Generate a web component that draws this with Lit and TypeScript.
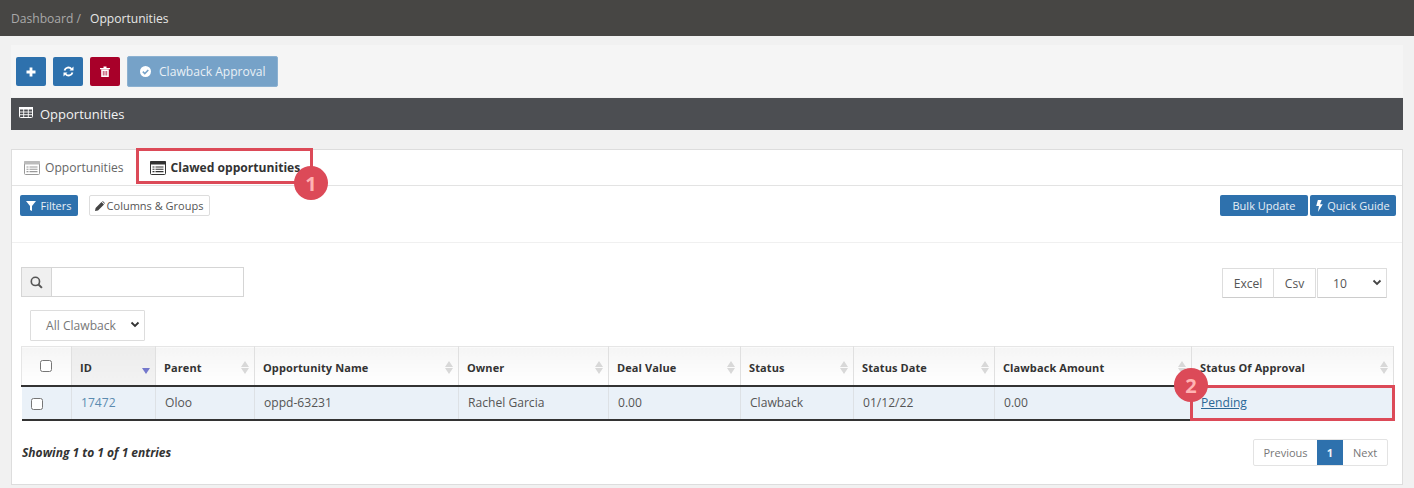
import { LitElement, html, css, svg } from "lit";
import { customElement } from "lit/decorators.js";

const cols: [string, number][] = [
  ["ID", 84], ["Parent", 99], ["Opportunity Name", 204], ["Owner", 150], ["Deal Value", 132],
  ["Status", 113], ["Status Date", 141], ["Clawback Amount", 197], ["Status Of Approval", 202],
];
const listIcon = (c: string, bar: string) => svg`<svg width="16" height="14" viewBox="0 0 16 14"><rect x=".5" y=".5" width="15" height="13" rx="1" fill="#fff" stroke="${c}"/><rect x="0" y="0" width="16" height="3.500" rx="1" fill="${bar}"/><path d="M2.500 6h2M5.500 6h8M2.500 8.300h2M5.500 8.300h8M2.500 10.600h2M5.500 10.600h8" stroke="${c}" stroke-width="1.100"/></svg>`;
const sort = (active = false) => html`<span class="sort ${active ? "on" : ""}"><i class="up"></i><i class="down"></i></span>`;

@customElement("app-root")
export class AppRoot extends LitElement {
  static styles = css`
    :host { display: block; width: 1414px; height: 488px; overflow: hidden; background: #f1f1f1; font: 12.100px "Open Sans", sans-serif; color: #555; position: relative; }
    * { box-sizing: border-box; }
    .crumb { height: 36px; background: #474644; display: flex; align-items: center; padding: 0 0 0 11px; font-size: 12.100px; color: #a9a9a9; gap: 4px; }
    .crumb b { font-weight: 400; color: #e6e6e6; margin-left: 5px; }
    .wrap { margin: 9px 11px 0; }
    .tools { height: 52px; background: #f5f5f5; display: flex; align-items: center; padding: 1px 5px 0; gap: 7px; }
    .sq { width: 30px; height: 29px; border-radius: 2px; background: #2e71ad; display: flex; align-items: center; justify-content: center; border: 0; padding: 0; }
    .sq.red { background: #a80029; }
    .claw { width: 151px; height: 31px; border-radius: 2px; background: #76a2c8; border: 1px solid #8cb1d1; color: #e9f0f6; font: 12.100px "Open Sans", sans-serif; display: flex; align-items: center; gap: 8px; padding: 0 0 0 12px; }
    .bar { margin-top: 1px; height: 32px; background: #4c4e52; color: #f3f3f3; font-size: 13px; display: flex; align-items: center; gap: 7px; padding: 0 0 0 8px; }
    .bar svg { margin-top: -3px; }
    .panel { margin-top: 19px; height: 336px; background: #fff; border: 1px solid #ddd; position: relative; }
    .tabs { height: 36px; border-bottom: 1px solid #e3e3e3; display: flex; align-items: center; padding: 0 0 0 12px; }
    .tab { display: flex; align-items: center; gap: 5px; color: #666; font-size: 12.100px; }
    .tab.on { margin-left: 26px; font-weight: 700; color: #333; }
    .filter { height: 57px; border-bottom: 1px solid #f0f0f0; display: flex; align-items: flex-start; padding: 9px 6px 0 8px; }
    .btn { height: 21px; border-radius: 2px; background: #2e71ad; color: #e8eff6; font-size: 11px; display: flex; align-items: center; justify-content: center; gap: 4px; }
    .btn.f { width: 58px; }
    .btn.c { width: 121px; margin-left: 11px; background: #fff; border: 1px solid #ddd; color: #555; gap: 2px; padding-right: 1px; }
    .btn.b { width: 88px; margin-left: auto; }
    .btn.q { width: 86px; margin-left: 2px; }
    .ctl { height: 65px; display: flex; justify-content: space-between; padding: 24px 15px 0 9px; }
    .search { display: flex; width: 223px; height: 30px; border: 1px solid #d5d5d5; }
    .search span { width: 30px; background: #f0f0f0; border-right: 1px solid #d5d5d5; display: flex; align-items: center; justify-content: center; }
    .exp { display: flex; height: 31px; margin-top: 1px; }
    .exp span { height: 30px; border: 1px solid #ddd; border-bottom-color: #ccc; display: flex; align-items: center; justify-content: center; font-size: 12.100px; color: #555; border-radius: 1px; }
    .exp .x { width: 52px; }
    .exp .y { width: 43px; margin-left: -1px; margin-right: 1px; }
    .exp .n { width: 70px; justify-content: flex-start; padding-left: 15px; position: relative; }
    .chev { position: absolute; right: 4px; top: 10px; }
    .sel { margin: 2px 0 0 18px; width: 115px; height: 31px; border: 1px solid #ddd; border-radius: 1px; display: flex; align-items: center; padding-left: 15px; color: #777; position: relative; }
    table { margin: 5px 0 0 9px; border-collapse: collapse; table-layout: fixed; width: 1373px; }
    th { height: 39px; padding: 4px 9px 0 8px; text-align: left; font-size: 11px; font-weight: 700; color: #333; background: linear-gradient(#f5f5f5, #fff); border-right: 1px solid #e0e0e0; border-top: 1px solid #e6e6e6; border-bottom: 2px solid #333; position: relative; letter-spacing: .1px; }
    th:first-child { border-left: 1px solid #e6e6e6; text-align: center; padding: 0 1px 2px 0; }
    th.act { background: linear-gradient(#ececec, #f3f3f3); }
    td { height: 34px; padding: 0 9px; font-size: 12.100px; color: #555; background: #eaf1f8; border-right: 1px solid #dde1e5; border-bottom: 2px solid #333; }
    td:first-child { text-align: center; padding: 0 18px 0 0; }
    td:last-child { border-right: 0; }
    td a { color: #5b8bb0; }
    td a.u { color: #2a6796; text-decoration: underline; }
    .cb { display: inline-block; width: 12px; height: 12px; border: 1px solid #767676; border-radius: 2.500px; background: #fff; vertical-align: middle; }
    .sort { position: absolute; right: 5px; top: 14px; display: flex; flex-direction: column; gap: 1px; }
    .sort i { display: block; width: 0; height: 0; border-left: 4px solid transparent; border-right: 4px solid transparent; }
    .sort .up { border-bottom: 6px solid #d8d8d8; }
    .sort .down { border-top: 6px solid #d8d8d8; }
    .sort.on .up { border-bottom-color: transparent; }
    .sort.on .down { border-top-color: #7478cc; }
    .foot { display: flex; justify-content: space-between; align-items: flex-start; padding: 18px 14px 0 10px; }
    .info { font-size: 12px; font-weight: 700; font-style: italic; color: #333; margin-top: 5px; }
    .pager { display: flex; height: 27px; border: 1px solid #e3e3e3; border-radius: 2px; font-size: 11px; color: #777; }
    .pager span { display: flex; align-items: center; justify-content: center; }
    .pager .p { width: 63px; }
    .pager .o { width: 26px; background: #2e71ad; color: #eef4f9; font-weight: 700; }
    .pager .x { width: 44px; }
    .mark { position: absolute; border: 3px solid #dc4a58; }
    .m1 { left: 136px; top: 148px; width: 177px; height: 36px; }
    .m2 { left: 1190px; top: 385px; width: 205px; height: 36px; }
    .dot { position: absolute; width: 34px; height: 34px; border-radius: 50%; background: #dc4a58; color: #ffb3b3; font-weight: 700; font-size: 20px; display: flex; align-items: center; justify-content: center; }
    .d1 { left: 294px; top: 166px; }
    .d2 { left: 1174px; top: 368px; }
  `;
  render() {
    return html`
      <div class="crumb">Dashboard / <b>Opportunities</b></div>
      <div class="wrap">
        <div class="tools">
          <button class="sq" aria-label="Add"><svg width="10" height="10" viewBox="0 0 10 10"><path d="M5 .5v9M.5 5h9" stroke="#fff" stroke-width="2.800"/></svg></button>
          <button class="sq" aria-label="Refresh"><svg width="11" height="11" viewBox="0 0 11 11" fill="none"><path d="M1.500 4.500A4 4 0 0 1 8.500 3M9.500 6.500A4 4 0 0 1 2.500 8" stroke="#fff" stroke-width="1.800"/><path d="M10.500 .5v4h-4zM.5 10.500v-4h4z" fill="#fff"/></svg></button>
          <button class="sq red" aria-label="Delete"><svg width="10" height="11" viewBox="0 0 10 11"><path d="M0 2h10v1.200H0zM3.500.5h3V2h-3zM1.200 3.500h7.600V11H1.200z" fill="#fff"/><path d="M3.300 5v4.500M5 5v4.500M6.700 5v4.500" stroke="#a80029" stroke-width=".7"/></svg></button>
          <div class="claw"><svg width="11" height="11" viewBox="0 0 11 11"><circle cx="5.500" cy="5.500" r="5.500" fill="#fff"/><path d="M2.800 5.600l2 2 3.500-3.700" fill="none" stroke="#76a2c8" stroke-width="1.500"/></svg>Clawback Approval</div>
        </div>
        <div class="bar"><svg width="14" height="11" viewBox="0 0 14 11"><rect x=".5" y=".5" width="13" height="10" rx="1" fill="none" stroke="#fff"/><rect x="0" y="0" width="14" height="2.500" fill="#fff"/><path d="M0 5h14M0 7.700h14M4.700 2v8M9.300 2v8" stroke="#fff" stroke-width=".9"/></svg>Opportunities</div>
        <div class="panel">
          <div class="tabs">
            <div class="tab">${listIcon("#999", "#bbb")}Opportunities</div>
            <div class="tab on">${listIcon("#333", "#333")}Clawed opportunities</div>
          </div>
          <div class="filter">
            <div class="btn f"><svg width="10" height="10" viewBox="0 0 10 10"><path d="M0 0h10L6 5v5L4 9V5z" fill="#fff"/></svg>Filters</div>
            <div class="btn c"><svg width="10" height="10" viewBox="0 0 10 10"><path d="M0 10l.6-3L6.500 1l2.500 2.500L3 9.400zM7.200.4l.6-.4 2.200 2.200-.5.6z" fill="#444"/></svg>Columns &amp; Groups</div>
            <div class="btn b">Bulk Update</div>
            <div class="btn q"><svg width="7" height="12" viewBox="0 0 6 11"><path d="M1.500 0h3.500L3.500 3.800H6L1.500 11l1-5.500H0z" fill="#fff"/></svg>Quick Guide</div>
          </div>
          <div class="ctl">
            <div class="search"><span><svg width="13" height="13" viewBox="0 0 12 12" fill="none"><circle cx="5" cy="5" r="3.800" stroke="#555" stroke-width="1.500"/><path d="M7.800 7.800L11 11" stroke="#555" stroke-width="1.800"/></svg></span></div>
            <div class="exp"><span class="x">Excel</span><span class="y">Csv</span><span class="n">10<svg class="chev" width="10" height="7" viewBox="0 0 10 7" fill="none"><path d="M1.500 1.500l3.500 3.500 3.500-3.500" stroke="#444" stroke-width="1.800"/></svg></span></div>
          </div>
          <div class="sel">All Clawback<svg class="chev" width="10" height="7" viewBox="0 0 10 7" fill="none"><path d="M1.500 1.500l3.500 3.500 3.500-3.500" stroke="#333" stroke-width="1.800"/></svg></div>
          <table>
            <colgroup><col style="width:50px" />${cols.map(([, w]) => html`<col style="width:${w}px" />`)}</colgroup>
            <thead><tr>
              <th><span class="cb"></span></th>
              ${cols.map(([n], i) => html`<th class="${i === 0 ? "act" : ""}">${n}${sort(i === 0)}</th>`)}
            </tr></thead>
            <tbody><tr>
              <td><span class="cb"></span></td>
              <td><a>17472</a></td><td>Oloo</td><td>oppd-63231</td><td>Rachel Garcia</td><td>0.00</td><td>Clawback</td><td>01/12/22</td><td>0.00</td><td><a class="u">Pending</a></td>
            </tr></tbody>
          </table>
          <div class="foot">
            <div class="info">Showing 1 to 1 of 1 entries</div>
            <div class="pager"><span class="p">Previous</span><span class="o">1</span><span class="x">Next</span></div>
          </div>
        </div>
      </div>
      <div class="mark m1"></div><div class="dot d1">1</div>
      <div class="mark m2"></div><div class="dot d2">2</div>
    `;
  }
}
